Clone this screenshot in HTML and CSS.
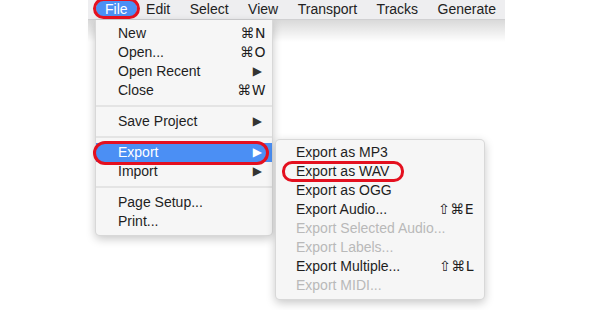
FILE: index.html
```html
<!DOCTYPE html>
<html lang="en">
<head>
    <meta charset="UTF-8">
    <title>File menu - Export as WAV</title>
    <link rel="stylesheet" href="styles.css">
</head>
<body>
    <div class="screen">
        <div class="menubar">
            <div class="menubar-item active">
                File
                <span class="ring ring-file"></span>

                <!-- File dropdown -->
                <div class="dropdown">
                    <div class="row"><span>New</span><span class="key">⌘N</span></div>
                    <div class="row"><span>Open...</span><span class="key">⌘O</span></div>
                    <div class="row"><span>Open Recent</span><span class="arrow">▶</span></div>
                    <div class="row"><span>Close</span><span class="key">⌘W</span></div>
                    <div class="sep"></div>
                    <div class="row"><span>Save Project</span><span class="arrow">▶</span></div>
                    <div class="sep"></div>
                    <div class="row selected">
                        <span>Export</span><span class="arrow">▶</span>
                        <span class="ring ring-export"></span>

                        <div class="submenu">
                            <div class="row"><span>Export as MP3</span></div>
                            <div class="row">
                                <span>Export as WAV</span>
                                <span class="ring ring-wav"></span>
                            </div>
                            <div class="row"><span>Export as OGG</span></div>
                            <div class="row"><span>Export Audio...</span><span class="key">⇧⌘E</span></div>
                            <div class="row disabled"><span>Export Selected Audio...</span></div>
                            <div class="row disabled"><span>Export Labels...</span></div>
                            <div class="row"><span>Export Multiple...</span><span class="key">⇧⌘L</span></div>
                            <div class="row disabled"><span>Export MIDI...</span></div>
                        </div>
                    </div>
                    <div class="row"><span>Import</span><span class="arrow">▶</span></div>
                    <div class="sep"></div>
                    <div class="row"><span>Page Setup...</span></div>
                    <div class="row"><span>Print...</span></div>
                </div>
            </div>
            <div class="menubar-item">Edit</div>
            <div class="menubar-item">Select</div>
            <div class="menubar-item">View</div>
            <div class="menubar-item">Transport</div>
            <div class="menubar-item">Tracks</div>
            <div class="menubar-item">Generate</div>
        </div>
        <div class="bar-shadow"></div>
    </div>
</body>
</html>
```

FILE: styles.css
```css
/* menu screenshot */
html, body {
    height: 100%;
}

body {
    margin: 0;
    background: #ffffff;
    font-family: "Liberation Sans", Arial, "DejaVu Sans", sans-serif;
    font-size: 14px;
    color: #1e1e1e;
}

.screen {
    height: 310px;
    padding-left: 88px;
}

.menubar {
    display: flex;
    width: 417px;
    height: 20px;
    padding-left: 8px;
    background: #eeeef0;
    border-bottom: 1px solid #d0d0d2;
    box-sizing: border-box;
    line-height: 18px;
}

.menubar-item {
    position: relative;
    padding: 0 10px 0 9.5px;
    height: 17px;
    color: #222;
    white-space: nowrap;
}

.menubar-item.active {
    padding: 0 9px;
    background: #4b8ff4;
    color: #ffffff;
    border-radius: 8px;
}

.bar-shadow {
    width: 417px;
    height: 22px;
    background: linear-gradient(rgba(0, 0, 0, 0.15), rgba(0, 0, 0, 0));
}

/* red annotation rings */
.ring {
    position: absolute;
    border: 3px solid #e4101f;
    box-sizing: border-box;
    border-radius: 12px;
    z-index: 5;
    pointer-events: none;
}

.ring-file {
    left: -3px;
    top: -2px;
    width: 47px;
    height: 21px;
}

.ring-export {
    left: -3px;
    top: -2px;
    width: 176px;
    height: 24px;
}

.ring-wav {
    left: 6px;
    top: -1px;
    width: 122px;
    height: 21px;
    border-radius: 10px;
}

/* dropdowns */
.dropdown,
.submenu {
    position: absolute;
    background: #f6f6f6;
    border: 1px solid rgba(0, 0, 0, 0.12);
    box-shadow: 0 3px 10px rgba(0, 0, 0, 0.22);
    color: #1e1e1e;
    line-height: 19px;
    box-sizing: border-box;
    z-index: 2;
}

.dropdown {
    left: -1px;
    top: 20px;
    width: 178px;
    padding: 4px 0 4px;
    border-top: none;
    border-radius: 0 0 5px 5px;
}

.submenu {
    left: 179px;
    top: -4px;
    width: 210px;
    padding: 3px 0 4px;
    border-radius: 5px;
}

.row {
    position: relative;
    display: flex;
    justify-content: space-between;
    align-items: center;
    height: 19px;
    padding: 0 6px 0 22px;
}

.submenu .row {
    padding: 0 10px 0 20px;
}

.row.selected {
    background: #4b8ff4;
    color: #ffffff;
}

.row.selected .submenu .row {
    color: #1e1e1e;
}

.row.selected .submenu .row.disabled,
.row.disabled {
    color: #b9b9b9;
}

.key {
    font-family: "DejaVu Sans", sans-serif;
    font-size: 14px;
    letter-spacing: 0.5px;
}

.arrow {
    font-family: "DejaVu Sans", sans-serif;
    font-size: 12px;
    margin-right: 4px;
    color: #333;
}

.row.selected > .arrow {
    color: #ffffff;
}

.sep {
    height: 2px;
    margin: 5px 0;
    background: #e4e4e4;
}
```
